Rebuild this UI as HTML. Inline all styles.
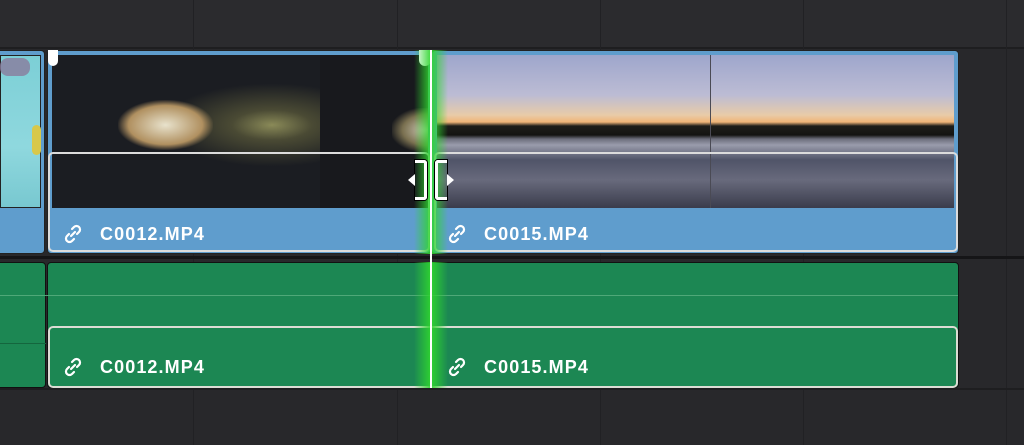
<!DOCTYPE html><html><head><style>
body{margin:0;width:1024px;height:445px;background:#28282b;position:relative;overflow:hidden;font-family:"Liberation Sans",sans-serif}
div{position:absolute;box-sizing:border-box}
.vl{top:0;width:1px;height:445px;background:#212124}
.lbl{color:#fff;font-weight:bold;font-size:18px;letter-spacing:1.1px}
.ico{width:22px;height:22px}
</style></head><body>
<div style="left:0;top:0;width:1024px;height:47px;background:#2b2b2e"></div>
<div style="left:0;top:47px;width:1024px;height:2px;background:#1e1e20"></div>
<div class="vl" style="left:193px"></div><div class="vl" style="left:397px"></div><div class="vl" style="left:600px"></div><div class="vl" style="left:803px"></div><div class="vl" style="left:1006px"></div>
<div style="left:0;top:256px;width:1024px;height:3px;background:#151517"></div>
<div style="left:0;top:388px;width:1024px;height:2px;background:#1e1e20"></div>

<!-- video track -->
<div style="left:-4px;top:50px;width:49px;height:204px;background:#5f9dcd;border-radius:4px;border:1px solid #222"></div>
<div style="left:0;top:55px;width:41px;height:153px;background:linear-gradient(180deg,#7ccfd6,#8fd8de 60%,#78c8d0);border:1px solid #222"></div>
<div style="left:32px;top:125px;width:9px;height:30px;background:#d8c84a;border-radius:5px"></div>
<div style="left:0;top:58px;width:30px;height:18px;background:#8a7a9c;border-radius:8px;opacity:.8"></div>

<div style="left:47px;top:50px;width:384px;height:204px;background:#5f9dcd;border-radius:4px;border:1px solid #222"></div>
<div style="left:52px;top:55px;width:376px;height:153px;background:radial-gradient(ellipse at 220px 70px,#8a8a58 0,#4a4a34 40px,#1b1d22 110px),#1a1b20"></div>
<div style="left:118px;top:100px;width:95px;height:50px;background:radial-gradient(ellipse,#e8e2cc,#b09060 55%,transparent 72%)"></div>
<div style="left:320px;top:55px;width:108px;height:153px;background:#18191d"></div>
<div style="left:392px;top:108px;width:36px;height:44px;background:radial-gradient(ellipse at right,#d8d4c4,#7a7050 50%,transparent 75%)"></div>
<div style="left:48px;top:152px;width:382px;height:100px;border:2.5px solid #dcdcdc;border-radius:5px"></div>
<div style="left:48px;top:50px;width:10px;height:16px;background:#fff;border-radius:0 0 5px 5px"></div>
<div style="left:419px;top:50px;width:12px;height:16px;background:#fff;border-radius:0 0 6px 6px"></div>

<div style="left:431px;top:50px;width:528px;height:204px;background:#5f9dcd;border-radius:4px;border:1px solid #222"></div>
<div style="left:437px;top:55px;width:517px;height:153px;background:linear-gradient(180deg,#9ea6cc 0,#bcbcd4 40px,#e8cba8 60px,#f0b578 67px,#1e1e1a 71px,#141412 80px,#6c6e7c 84px,#9a9cac 90px,#505468 105px,#686a7c 125px,#3a3c4c 153px)"></div>
<div style="left:710px;top:55px;width:1px;height:153px;background:#4a4a54"></div>
<div style="left:434px;top:152px;width:524px;height:100px;border:2.5px solid #dcdcdc;border-radius:5px"></div>

<!-- audio -->
<div style="left:-4px;top:262px;width:50px;height:126px;background:#1c8753;border-radius:4px;border:1px solid #111"></div>
<div style="left:47px;top:262px;width:912px;height:126px;background:#1c8753;border-radius:4px;border:1px solid #111"></div>
<div style="left:0;top:295px;width:958px;height:1px;background:#4fa878"></div>
<div style="left:0;top:343px;width:46px;height:1px;background:#14663e"></div>
<div style="left:48px;top:326px;width:910px;height:62px;border:2.5px solid #dcdcd4;border-radius:5px"></div>

<!-- green edit line -->
<div style="left:414px;top:50px;width:34px;height:204px;background:linear-gradient(90deg,transparent,#2fd62f 45%,#2fd62f 55%,transparent);opacity:.85"></div>
<div style="left:414px;top:262px;width:34px;height:126px;background:linear-gradient(90deg,transparent,#2fd62f 45%,#2fd62f 55%,transparent);opacity:.85"></div>
<div style="left:430px;top:50px;width:2px;height:338px;background:#fff"></div>
<div style="left:415px;top:160px;width:12px;height:40px;border:3px solid #fff;border-left:none;border-radius:0 3px 3px 0;box-shadow:0 0 0 1px #000"></div>
<div style="left:435px;top:160px;width:12px;height:40px;border:3px solid #fff;border-right:none;border-radius:3px 0 0 3px;box-shadow:0 0 0 1px #000"></div>
<div style="left:408px;top:174px;width:0;height:0;border:6px solid transparent;border-right:7px solid #fff;border-left:none"></div>
<div style="left:447px;top:174px;width:0;height:0;border:6px solid transparent;border-left:7px solid #fff;border-right:none"></div>

<!-- labels -->
<svg class="ico" style="position:absolute;left:62px;top:223px" viewBox="0 0 22 22" fill="none" stroke="#fff" stroke-width="2.2" stroke-linecap="round"><path d="M9 13l4-4M10 6l2-2a3.5 3.5 0 015 5l-2 2M12 16l-2 2a3.5 3.5 0 01-5-5l2-2"/></svg>
<div class="lbl" style="left:100px;top:224px">C0012.MP4</div>
<svg class="ico" style="position:absolute;left:446px;top:223px" viewBox="0 0 22 22" fill="none" stroke="#fff" stroke-width="2.2" stroke-linecap="round"><path d="M9 13l4-4M10 6l2-2a3.5 3.5 0 015 5l-2 2M12 16l-2 2a3.5 3.5 0 01-5-5l2-2"/></svg>
<div class="lbl" style="left:484px;top:224px">C0015.MP4</div>
<svg class="ico" style="position:absolute;left:62px;top:356px" viewBox="0 0 22 22" fill="none" stroke="#fff" stroke-width="2.2" stroke-linecap="round"><path d="M9 13l4-4M10 6l2-2a3.5 3.5 0 015 5l-2 2M12 16l-2 2a3.5 3.5 0 01-5-5l2-2"/></svg>
<div class="lbl" style="left:100px;top:357px">C0012.MP4</div>
<svg class="ico" style="position:absolute;left:446px;top:356px" viewBox="0 0 22 22" fill="none" stroke="#fff" stroke-width="2.2" stroke-linecap="round"><path d="M9 13l4-4M10 6l2-2a3.5 3.5 0 015 5l-2 2M12 16l-2 2a3.5 3.5 0 01-5-5l2-2"/></svg>
<div class="lbl" style="left:484px;top:357px">C0015.MP4</div>
</body></html>
